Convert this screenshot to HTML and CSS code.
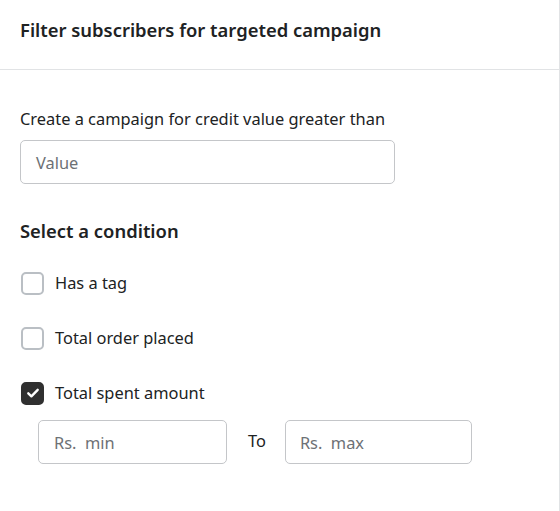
FILE: index.html
```html
<!DOCTYPE html>
<html>
<head>
<meta charset="utf-8">
<link rel="stylesheet" href="styles.css">
</head>
<body>
<div class="panel">
  <div class="header">
    <h2 class="title">Filter subscribers for targeted campaign</h2>
  </div>
  <div class="content">
    <label class="field-label">Create a campaign for credit value greater than</label>
    <div class="input wide"><span class="ph">Value</span></div>
    <h3 class="section-title">Select a condition</h3>
    <div class="options">
      <div class="option"><span class="box"></span><span class="opt-label">Has a tag</span></div>
      <div class="option"><span class="box"></span><span class="opt-label">Total order placed</span></div>
      <div class="option"><span class="box checked"><svg width="16" height="16" viewBox="0 0 16 16"><path d="M3.3 8.3 L6.4 11.3 L12.7 4.8" fill="none" stroke="#fff" stroke-width="2.4" stroke-linecap="round" stroke-linejoin="round"/></svg></span><span class="opt-label">Total spent amount</span></div>
    </div>
    <div class="range">
      <div class="input small"><span class="ph">Rs.&nbsp; min</span></div>
      <span class="to">To</span>
      <div class="input small2"><span class="ph">Rs.&nbsp; max</span></div>
    </div>
  </div>
</div>
</body>
</html>
```
FILE: styles.css
```css
* { box-sizing: border-box; }
html, body { margin: 0; padding: 0; background: #fff; }
body {
  font-family: "Noto Sans", "Open Sans", "Liberation Sans", sans-serif;
  color: #202223;
}
.panel {
  width: 560px;
  height: 511px;
  border-right: 1px solid #e1e3e5;
}
.header {
  height: 70px;
  padding: 18px 20px 0;
  border-bottom: 1px solid #e1e3e5;
}
.title {
  margin: 0;
  font-size: 18.4px;
  font-weight: 600;
  line-height: 24px;
}
.content {
  padding: 37px 20px 0;
}
.field-label {
  display: block;
  font-size: 16.4px;
  line-height: 24px;
  margin-bottom: 9px;
}
.input {
  height: 44px;
  border: 1px solid #c4c6c9;
  border-radius: 5px;
  display: flex;
  align-items: center;
  padding: 0 15px;
  font-size: 16.4px;
}
.ph { color: #6d7175; }
.input.wide { width: 375px; }
.section-title {
  margin: 35px 0 28px;
  font-size: 18.4px;
  font-weight: 600;
  line-height: 24px;
}
.options {
  display: flex;
  flex-direction: column;
  gap: 31px;
}
.option {
  display: flex;
  align-items: center;
  height: 24px;
  padding-left: 1px;
}
.box {
  width: 23px;
  height: 23px;
  border: 2px solid #babfc4;
  border-radius: 5px;
  display: flex;
  align-items: center;
  justify-content: center;
}
.box.checked {
  background: #303030;
  border-color: #303030;
}
.opt-label {
  margin-left: 11px;
  font-size: 16.4px;
  line-height: 24px;
}
.range {
  display: flex;
  align-items: center;
  margin-top: 15px;
  padding-left: 18px;
}
.input.small { width: 189px; }
.input.small2 { width: 187px; padding-left: 14px; }
.to {
  font-size: 16.4px;
  margin: -3px 19px 0 21px;
}
```
